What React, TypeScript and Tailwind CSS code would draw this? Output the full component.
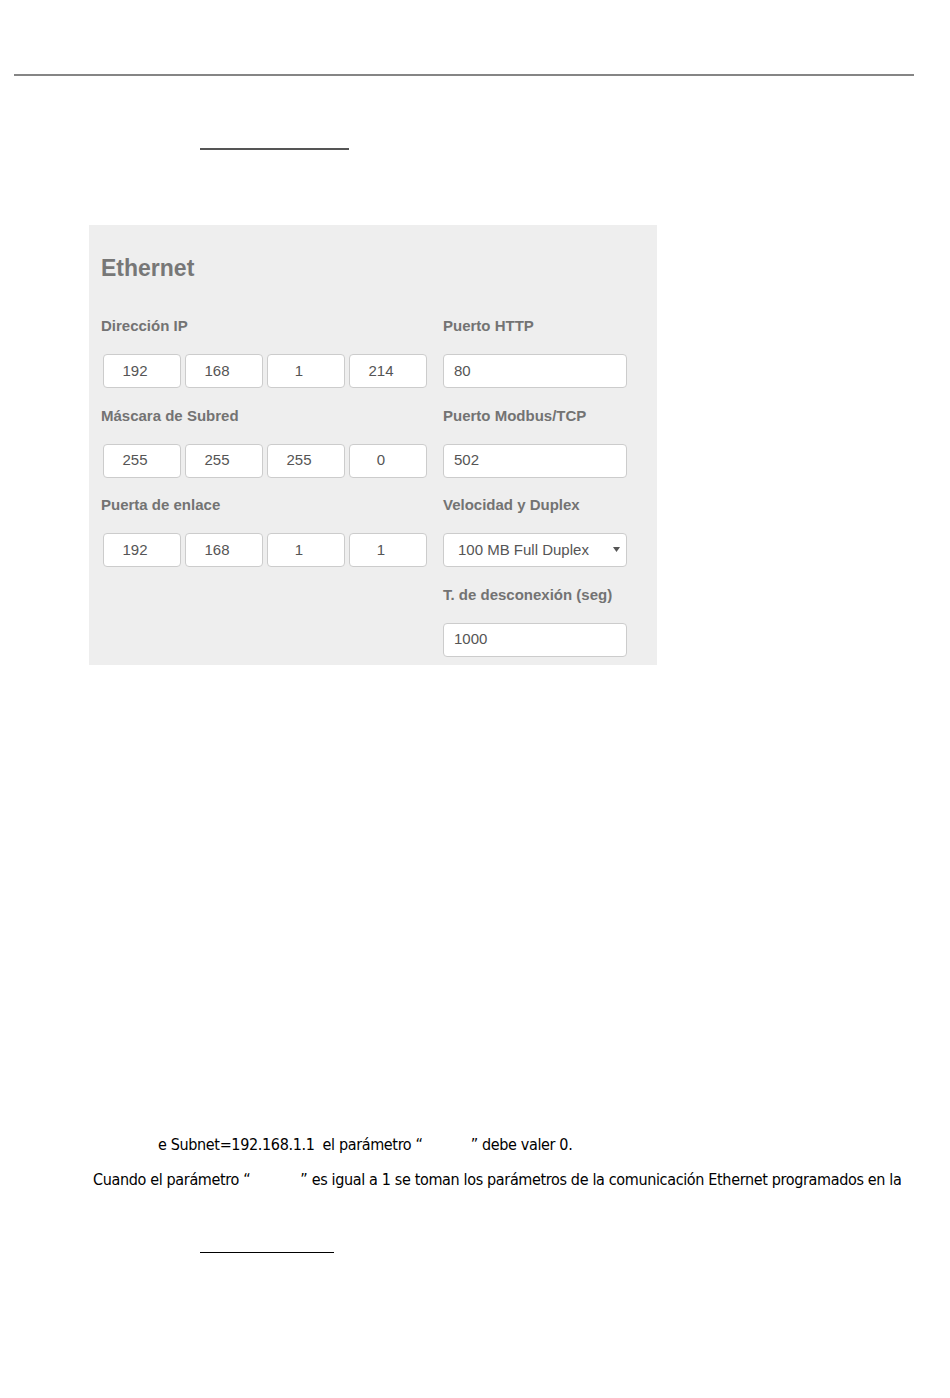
import React from "react";

const Field = ({ label, children }: { label: string; children: React.ReactNode }) => (
  <div className="flex flex-col mb-[17.5px]">
    <div className="h-5 leading-5 text-[15px] font-bold text-[#737373] mb-[18px] whitespace-nowrap">{label}</div>
    {children}
  </div>
);

const Octets = ({ values }: { values: string[] }) => (
  <div className="flex gap-[4px] ml-[2px]">
    {values.map((v, i) => (
      <div
        key={i}
        className="w-[78px] h-[34px] bg-white border border-[#cccccc] rounded-[4px] flex items-center justify-center pr-[14px] text-[15px] text-[#555555]"
      >
        {v}
      </div>
    ))}
  </div>
);

const Box = ({ value }: { value: string }) => (
  <div className="w-[184px] h-[34px] bg-white border border-[#cccccc] rounded-[4px] flex items-center pl-[10px] text-[15px] text-[#555555]">
    {value}
  </div>
);

export default function App() {
  return (
    <div className="w-[950px] h-[1398px] bg-white overflow-hidden" style={{ fontFamily: "Arial, 'Liberation Sans', sans-serif" }}>
      <div className="pt-[74px]">
        <div className="ml-[14px] w-[900px] h-[2px] bg-[#858585]" />
      </div>
      <div className="mt-[72px] ml-[200px] w-[149px] h-[2px] bg-[#555555]" />

      <div className="mt-[75px] ml-[89px] w-[568px] h-[440px] bg-[#eeeeee] px-3 pt-[29px]">
        <div className="h-[28px] leading-[28px] text-[23px] font-bold text-[#777777]">Ethernet</div>
        <div className="mt-[34px] flex">
          <div className="w-[342px] flex flex-col">
            <Field label="Dirección IP">
              <Octets values={["192", "168", "1", "214"]} />
            </Field>
            <Field label="Máscara de Subred">
              <Octets values={["255", "255", "255", "0"]} />
            </Field>
            <Field label="Puerta de enlace">
              <Octets values={["192", "168", "1", "1"]} />
            </Field>
          </div>
          <div className="w-[184px] flex flex-col">
            <Field label="Puerto HTTP">
              <Box value="80" />
            </Field>
            <Field label="Puerto Modbus/TCP">
              <Box value="502" />
            </Field>
            <Field label="Velocidad y Duplex">
              <div className="w-[184px] h-[34px] bg-white border border-[#cccccc] rounded-[4px] flex items-center pl-[14px] pr-[6px] text-[15px] text-[#555555]">
                <span className="flex-1">100 MB Full Duplex</span>
                <svg width="7" height="5" viewBox="0 0 7 5" className="mt-[-2px]">
                  <path d="M0 0 L7 0 L3.5 5 Z" fill="#555555" />
                </svg>
              </div>
            </Field>
            <Field label="T. de desconexión (seg)">
              <Box value="1000" />
            </Field>
          </div>
        </div>
      </div>

      <div
        className="mt-[462px] text-[16px] tracking-[-0.35px] leading-[35px] text-black whitespace-nowrap [font-stretch:condensed]"
        style={{ fontFamily: "'DejaVu Sans', sans-serif" }}
      >
        <div className="pl-[158px]">
          <span>e Subnet=192.168.1.1</span>
          <span className="inline-block w-[8px]" />
          <span>el parámetro “</span>
          <span className="inline-block w-[48px]" />
          <span>” debe valer 0.</span>
        </div>
        <div className="pl-[93px]">
          <span>Cuando el parámetro “</span>
          <span className="inline-block w-[50px]" />
          <span>” es igual a 1 se toman los parámetros de la comunicación Ethernet programados en la</span>
        </div>
      </div>
      <div className="mt-[55px] ml-[200px] w-[134px] h-px bg-black" />
    </div>
  );
}
